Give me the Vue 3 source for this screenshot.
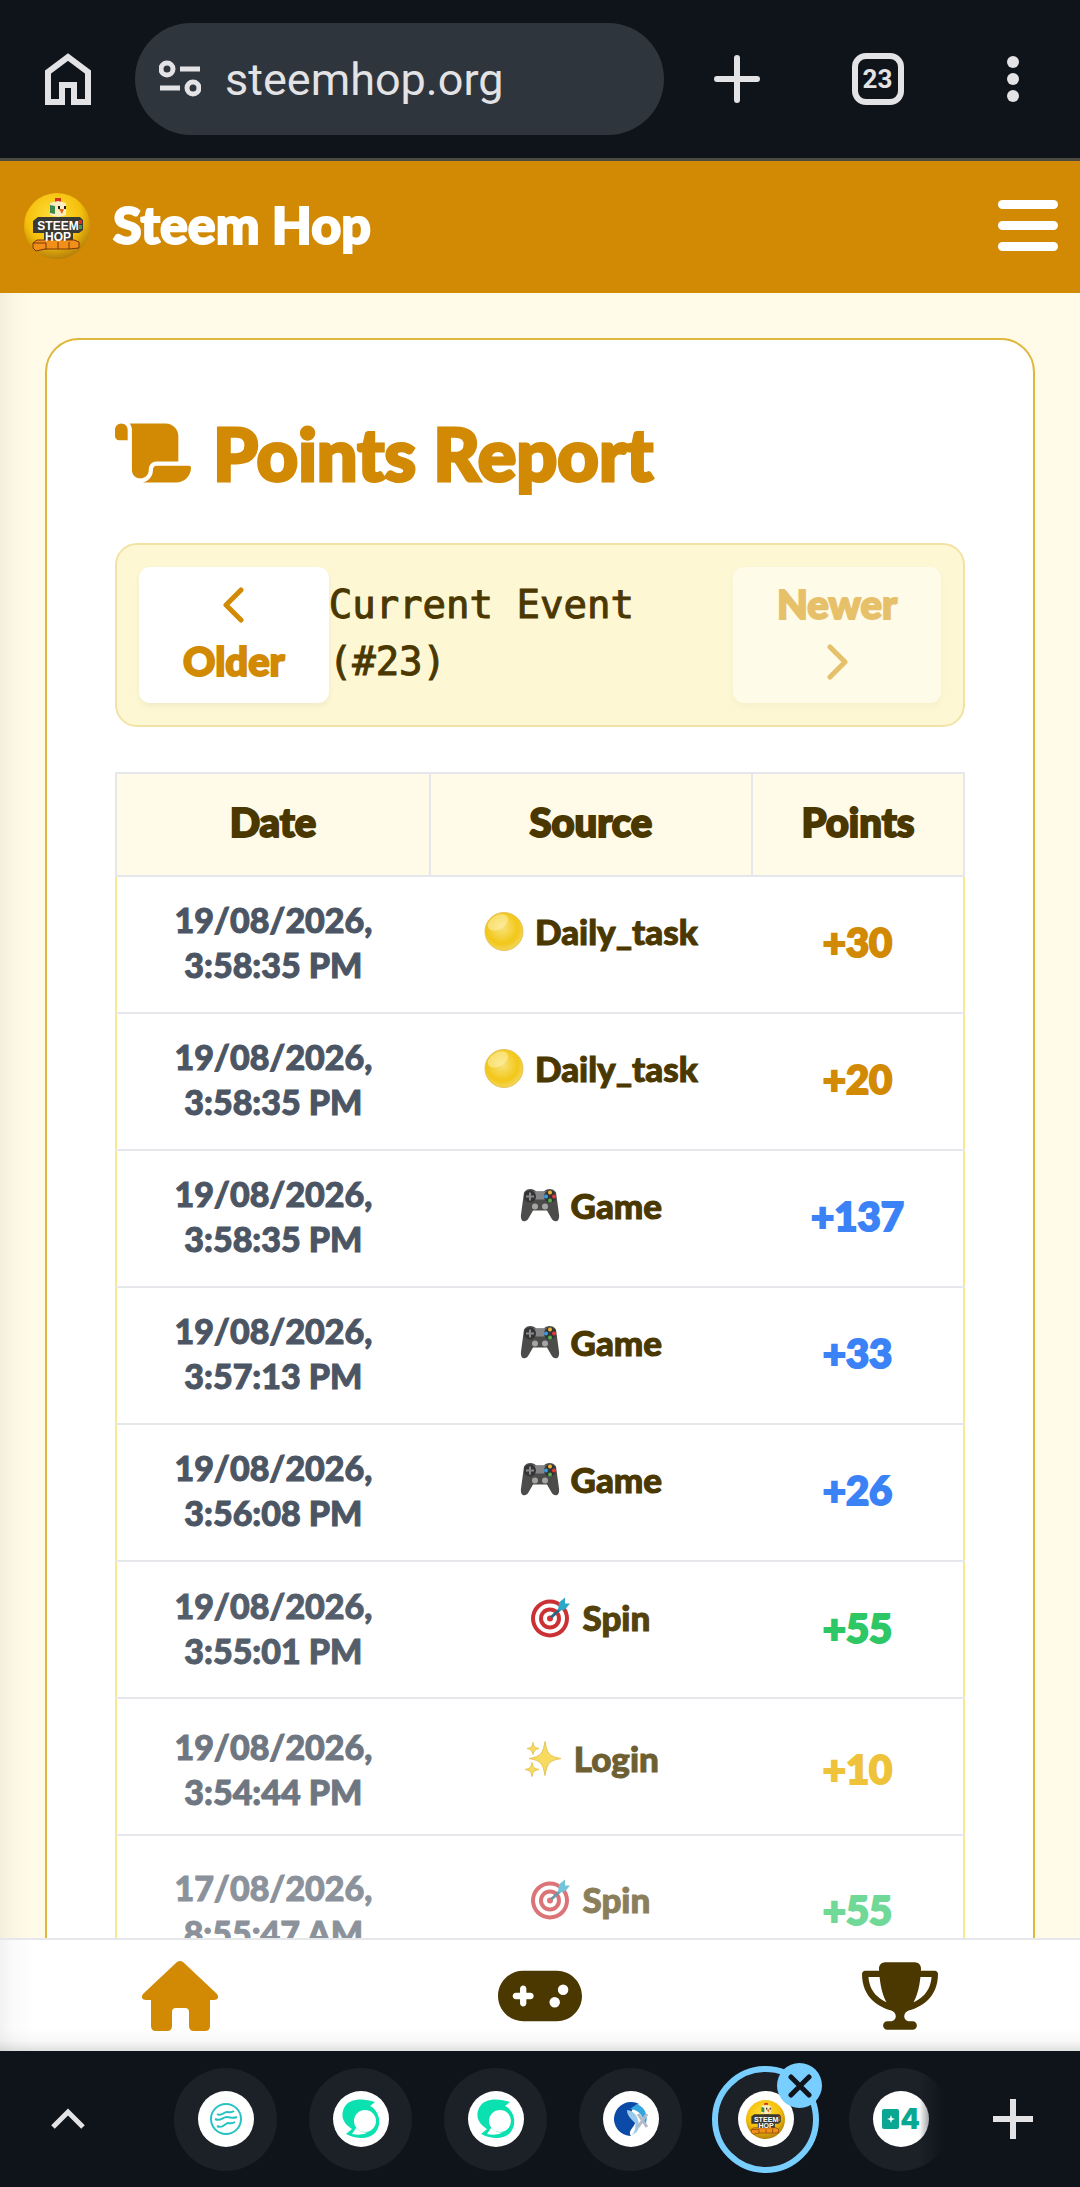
<template>
  <div class="screen">

    <!-- Shared logo, used in the header and in the tab strip -->
    <svg class="defs" aria-hidden="true">
      <defs>
        <radialGradient id="ball" cx="0.45" cy="0.35" r="0.7">
          <stop offset="0" stop-color="#ffdf3a" />
          <stop offset="0.6" stop-color="#f5bf0c" />
          <stop offset="1" stop-color="#a8730a" />
        </radialGradient>
        <symbol id="hop-logo" viewBox="0 0 66 66">
          <circle cx="33" cy="33" r="33" fill="url(#ball)" />
          <path d="M31 5h6v5h-6z" fill="#d8301c" />
          <path d="M26 10l8-2 8 2v12l-8 2-8-2z" fill="#fbeec0" />
          <path d="M26 12l5 1v8l-5-1z" fill="#3f8a4c" />
          <path d="M34 13h2v3h-2zM40 13h2v3h-2z" fill="#222" />
          <path d="M35 16h5l-2 5z" fill="#e8641b" />
          <path d="M30 24h10v3H30z" fill="#a8581b" />
          <path d="M9 28l5-4h42l3 3v10l-4 3h-6v10H20V40H9z" fill="#3a3a32" />
          <path d="M55 27h3v4h-3z" fill="#d8301c" />
          <path d="M55 32h3v4h-3z" fill="#3f9a4c" />
          <path d="M9 50l4-3h37l5 2v6l-10 1H21l-9 2-3-3z" fill="#f0901a" stroke="#7a3608" stroke-width="1" />
          <path d="M9 50h13v7M34 49v7M45 49v7" fill="none" stroke="#7a3608" stroke-width="1" />
          <text x="34" y="37" class="logo-text">STEEM</text>
          <text x="34" y="48" class="logo-text">HOP</text>
        </symbol>
      </defs>
    </svg>

    <!-- Browser toolbar -->
    <div class="toolbar">
      <button class="tool" aria-label="Home">
        <svg width="46" height="52" viewBox="0 0 46 52">
          <path d="M3 49V19L23 4l20 15v30H29V32H17v17z" fill="none" stroke="#e3e3e6" stroke-width="6" />
        </svg>
      </button>
      <div class="address">
        <svg width="42" height="38" viewBox="0 0 42 38" fill="none" stroke="#e3e3e6" stroke-width="5">
          <circle cx="8" cy="9" r="6" />
          <path d="M21 9h20M1 28h20" />
          <circle cx="34" cy="28" r="6" />
        </svg>
        <input v-model="url" aria-label="Address" />
      </div>
      <button class="tool wide" aria-label="New tab">
        <svg width="46" height="48" viewBox="0 0 46 48">
          <path d="M23 3v42M3 24h40" stroke="#e3e3e6" stroke-width="6" stroke-linecap="round" />
        </svg>
      </button>
      <button class="tool" aria-label="Tabs"><span class="count">23</span></button>
      <button class="tool" aria-label="Menu">
        <svg width="12" height="48" viewBox="0 0 12 48" fill="#e3e3e6">
          <circle cx="6" cy="7" r="6" />
          <circle cx="6" cy="24" r="6" />
          <circle cx="6" cy="41" r="6" />
        </svg>
      </button>
    </div>

    <div class="site">

      <header class="header">
        <svg class="brand-logo"><use href="#hop-logo" /></svg>
        <span class="brand">Steem Hop</span>
        <button class="burger" aria-label="Open menu">
          <span></span>
          <span></span>
          <span></span>
        </button>
      </header>

      <main class="content">
        <div class="card">

          <h1>
            <svg width="76" height="68" viewBox="0 0 576 512" fill="currentColor">
              <path d="M0 80v48c0 17.7 14.3 32 32 32H96V80c0-26.5-21.5-48-48-48S0 53.5 0 80zM112 32c10 13.4 16 30 16 48V384c0 35.3 28.7 64 64 64s64-28.7 64-64v-5.3c0-32.4 26.3-58.7 58.7-58.7H480V128c0-53-43-96-96-96H112zM464 480c61.9 0 112-50.1 112-112c0-8.8-7.2-16-16-16H314.7c-14.7 0-26.7 11.9-26.7 26.7V384c0 53-43 96-96 96H464z" />
            </svg>
            Points Report
          </h1>

          <div class="pager">
            <button class="page-btn" @click="older">
              <span class="arrow">
                <svg width="22" height="36" viewBox="0 0 22 36">
                  <path d="M18 3L3 18l15 15" />
                </svg>
              </span>
              Older
            </button>
            <span class="event">{{ eventLabel }}</span>
            <button class="page-btn" :disabled="event === latest" @click="newer">
              Newer
              <span class="arrow">
                <svg width="22" height="36" viewBox="0 0 22 36">
                  <path d="M4 3l15 15L4 33" />
                </svg>
              </span>
            </button>
          </div>

          <table>
            <thead>
              <tr>
                <th class="col-date">Date</th>
                <th class="col-source">Source</th>
                <th class="col-points">Points</th>
              </tr>
            </thead>
            <tbody>
              <tr v-for="(row, i) in rows" :key="i">
                <td class="date">
                  <div :style="fade(row)">{{ row.day }},<br />{{ row.time }}</div>
                </td>
                <td class="source">
                  <div class="source-inner" :style="fade(row)">
                    <svg v-if="row.source === 'Daily_task'" class="emoji" viewBox="0 0 40 40">
                      <defs>
                        <radialGradient :id="'coin' + i" cx="0.45" cy="0.4" r="0.6">
                          <stop offset="0" stop-color="#f9e27c" />
                          <stop offset="0.7" stop-color="#f2c718" />
                          <stop offset="1" stop-color="#f3d65a" />
                        </radialGradient>
                      </defs>
                      <circle cx="20" cy="20" r="19" :fill="`url(#coin${i})`" stroke="#e8c25a" stroke-width="1" />
                      <ellipse cx="14" cy="11" rx="11" ry="7" fill="#fff3b8" opacity="0.5" transform="rotate(-30 14 11)" />
                    </svg>
                    <svg v-else-if="row.source === 'Game'" class="emoji" viewBox="0 0 40 40">
                      <path d="M4 7C7 2 14 3 16 6h8c2-3 9-4 12 1l3 22c1 8-5 9-8 3l-4-7H13l-4 7C6 38 0 37 1 29z" fill="#4c4c4a" />
                      <path d="M13 6h14v8H13z" fill="#858588" />
                      <circle cx="10" cy="11" r="6" fill="#333436" />
                      <circle cx="30" cy="11" r="6" fill="#333436" />
                      <path d="M10 7v8M6 11h8" stroke="#8a8a8c" stroke-width="2" />
                      <circle cx="30" cy="7" r="2" fill="#f2b632" />
                      <circle cx="34" cy="11" r="2" fill="#e23a38" />
                      <circle cx="30" cy="15" r="2" fill="#55b047" />
                      <circle cx="26" cy="11" r="2" fill="#3b9be0" />
                      <circle cx="15" cy="21" r="3" fill="#a5a5a5" />
                      <circle cx="25" cy="21" r="3" fill="#a5a5a5" />
                    </svg>
                    <svg v-else-if="row.source === 'Spin'" class="emoji" viewBox="0 0 40 40">
                      <circle cx="19" cy="21" r="19" fill="#c8272b" />
                      <circle cx="19" cy="21" r="15" fill="#fff" />
                      <circle cx="19" cy="21" r="11" fill="#c8272b" />
                      <circle cx="19" cy="21" r="7" fill="#fff" />
                      <circle cx="19" cy="21" r="3" fill="#d8272b" />
                      <path d="M20 20L32 9" stroke="#17607f" stroke-width="3" />
                      <path d="M27 13l1-8 6-5v6h5l-5 6z" fill="#22a3c4" />
                    </svg>
                    <svg v-else class="emoji" viewBox="0 0 40 40" fill="#f4d336" stroke="#e2b52c" stroke-width="1">
                      <path d="M22 3c2 12 4 15 16 17-12 2-14 5-16 17-2-12-4-15-16-17C18 18 20 15 22 3z" />
                      <path d="M10 4c1 5 2 5 6 6-4 1-5 2-6 6-1-4-2-5-6-6 4-1 5-1 6-6z" />
                      <path d="M9 24c1 5 2 6 7 7-5 1-6 2-7 7-1-5-2-6-7-7 5-1 6-2 7-7z" />
                    </svg>
                    {{ row.source }}
                  </div>
                </td>
                <td class="points" :class="row.color">
                  <div :style="fade(row)">+{{ row.points }}</div>
                </td>
              </tr>
            </tbody>
          </table>

        </div>
      </main>

      <nav class="bottom-nav">
        <a href="#" class="active" aria-label="Home">
          <svg width="76" height="70" viewBox="0 0 76 70" fill="currentColor">
            <path d="M35 1q3-2 6 0l33 31q3 3 2 5-1 2-4 2h-4v26q0 5-5 5H52q-5 0-5-5V51q0-4-4-4H34q-4 0-4 4v14q0 5-5 5H14q-5 0-5-5V39H4q-3 0-4-2-1-2 2-5z" />
          </svg>
        </a>
        <a href="#" aria-label="Games">
          <svg width="84" height="68" viewBox="0 0 640 512" fill="currentColor">
            <path d="M192 64C86 64 0 150 0 256S86 448 192 448H448c106 0 192-86 192-192s-86-192-192-192H192zM496 168a40 40 0 1 1 0 80 40 40 0 1 1 0-80zM392 304a40 40 0 1 1 80 0 40 40 0 1 1 -80 0zM168 200c0-13.3 10.7-24 24-24s24 10.7 24 24v32h32c13.3 0 24 10.7 24 24s-10.7 24-24 24H216v32c0 13.3-10.7 24-24 24s-24-10.7-24-24V280H136c-13.3 0-24-10.7-24-24s10.7-24 24-24h32V200z" />
          </svg>
        </a>
        <a href="#" aria-label="Leaderboard">
          <svg width="76" height="68" viewBox="0 0 576 512" fill="currentColor">
            <path d="M400 0H176c-26.5 0-48.1 21.8-47.1 48.2c.2 5.3 .4 10.6 .7 15.8H24C10.7 64 0 74.7 0 88c0 92.6 33.5 157 78.5 200.7c44.3 43.1 98.3 64.8 138.1 75.8c23.4 6.5 39.4 26 39.4 45.6c0 20.9-17 37.9-37.9 37.9H192c-17.7 0-32 14.3-32 32s14.3 32 32 32H384c17.7 0 32-14.3 32-32s-14.3-32-32-32H357.9C337 448 320 431 320 410.1c0-19.6 15.9-39.2 39.4-45.6c39.9-11 93.9-32.7 138.2-75.8C542.5 245 576 180.6 576 88c0-13.3-10.7-24-24-24H446.4c.3-5.2 .5-10.4 .7-15.8C448.1 21.8 426.5 0 400 0zM48.9 112h84.4c9.1 90.1 29.2 150.3 51.9 190.6c-24.9-11-50.8-26.5-73.2-48.3c-32-31.1-58-76-63-142.3zM464.1 254.3c-22.4 21.8-48.3 37.3-73.2 48.3c22.7-40.3 42.8-100.5 51.9-190.6h84.4c-5.1 66.3-31.1 111.2-63 142.3z" />
          </svg>
        </a>
      </nav>

    </div>

    <!-- Browser tab strip -->
    <div class="tabs">
      <button class="tool" aria-label="Expand">
        <svg width="34" height="22" viewBox="0 0 34 22">
          <path d="M2 19L17 4l15 15" fill="none" stroke="#e3e3e6" stroke-width="5" />
        </svg>
      </button>
      <div class="strip">
        <div v-for="(tab, i) in tabs" :key="i" class="tab">
          <button class="chip" :class="{ current: tab === 'hop' }" :aria-label="'Tab ' + (i + 1)">
            <span class="favicon">
              <svg v-if="tab === 'waves'" width="34" height="34" viewBox="0 0 34 34" fill="none" stroke="#27c3c4" stroke-width="2">
                <circle cx="17" cy="17" r="15" />
                <path d="M8 12c5 3 6-2 10-2 3 0 4 1 7-1M6 17c6 3 7-2 12-2 4 0 5 2 10 0M8 24c6 3 7-2 11-3 3 0 4 1 7-1" />
              </svg>
              <svg v-else-if="tab === 'steem'" width="40" height="40" viewBox="0 0 40 40">
                <path d="M34 3C22-1 8-1 3 9c-4 9 0 16 8 21L5 35c10 5 22 6 29-1 7-8 5-20-3-26l-2-1z" fill="#0be0b0" />
                <circle cx="24" cy="22" r="11" fill="#fff" />
                <path d="M11 35l4-6q7 6 13 4-7 4-17 2z" fill="#fff" />
              </svg>
              <svg v-else-if="tab === 'sx'" width="36" height="36" viewBox="0 0 36 36">
                <path d="M26 3A17 17 0 1 0 18 35c-5-6 8-11 3-17-6-6-1-12 5-15z" fill="#0b4aa6" />
                <path d="M24 3c9 4 12 13 8 22C30 15 27 9 17 8z" fill="#35a5e2" />
                <path d="M14 9c8 1 12 7 12 18-5-8-12-10-12-18zM19 34c5-5 2-11 5-17 4 8 2 14-5 17z" fill="#9ac9ea" />
                <path d="M25 13l9 13M34 13l-9 13" stroke="#b4bac8" stroke-width="3" />
              </svg>
              <svg v-else-if="tab === 'hop'" width="39" height="39"><use href="#hop-logo" /></svg>
              <svg v-else width="40" height="28" viewBox="0 0 40 28">
                <rect x="1" y="4" width="17" height="20" rx="2" fill="#0aa892" />
                <path d="M10 10l1 3 3 1-3 1-1 3-1-3-3-1 3-1z" fill="#fff" />
                <text x="29" y="24" class="four">4</text>
              </svg>
            </span>
          </button>
          <button v-if="tab === 'hop'" class="close" aria-label="Close tab">
            <svg width="24" height="24" viewBox="0 0 24 24">
              <path d="M3 3l18 18M21 3L3 21" stroke="#10141b" stroke-width="5" stroke-linecap="round" />
            </svg>
          </button>
        </div>
      </div>
      <button class="tool" aria-label="New tab">
        <svg width="40" height="40" viewBox="0 0 40 40">
          <path d="M20 0v40M0 20h40" stroke="#e3e3e6" stroke-width="6" />
        </svg>
      </button>
    </div>

  </div>
</template>

<script setup>
import { ref, computed } from 'vue'

const url = ref('steemhop.org')

const latest = 23
const event = ref(latest)

const eventLabel = computed(() =>
  event.value === latest ? `Current Event (#${latest})` : `Event (#${event.value})`
)

const older = () => {
  if (event.value > 1) event.value--
}

const newer = () => {
  if (event.value < latest) event.value++
}

// shown = how far the row's entrance has got, 0 to 1
const rows = [
  { day: '19/08/2026', time: '3:58:35 PM', source: 'Daily_task', points: 30, color: 'orange', shown: 1 },
  { day: '19/08/2026', time: '3:58:35 PM', source: 'Daily_task', points: 20, color: 'orange', shown: 1 },
  { day: '19/08/2026', time: '3:58:35 PM', source: 'Game', points: 137, color: 'blue', shown: 1 },
  { day: '19/08/2026', time: '3:57:13 PM', source: 'Game', points: 33, color: 'blue', shown: 1 },
  { day: '19/08/2026', time: '3:56:08 PM', source: 'Game', points: 26, color: 'blue', shown: 1 },
  { day: '19/08/2026', time: '3:55:01 PM', source: 'Spin', points: 55, color: 'green', shown: 0.95 },
  { day: '19/08/2026', time: '3:54:44 PM', source: 'Login', points: 10, color: 'yellow', shown: 0.8 },
  { day: '17/08/2026', time: '8:55:47 AM', source: 'Spin', points: 55, color: 'green', shown: 0.64 }
]

const fade = (row) => {
  if (row.shown === 1) return null
  return {
    opacity: row.shown,
    transform: `translateY(${Math.round((1 - row.shown) * 24)}px)`
  }
}

const tabs = ['waves', 'steem', 'steem', 'sx', 'hop', 'cards']
</script>

<style>
body {
  margin: 0;
  background: #0f141b;
}
</style>

<style scoped>
* {
  box-sizing: border-box;
}

.screen {
  display: flex;
  flex-direction: column;
  height: 100vh;
  overflow: hidden;
  font-family: Lato, "Liberation Sans", sans-serif;
  font-weight: 900;
  color: #4a3800;
}

button {
  margin: 0;
  padding: 0;
  border: none;
  background: none;
  font: inherit;
  color: inherit;
}

svg {
  display: block;
  flex: none;
}

.defs {
  position: absolute;
  width: 0;
  height: 0;
}

.logo-text {
  font-family: "Liberation Sans", sans-serif;
  font-size: 12px;
  font-weight: 700;
  fill: #fff;
  text-anchor: middle;
}

/* Browser toolbar */
.toolbar {
  display: flex;
  align-items: center;
  flex: none;
  height: 161px;
  border-bottom: 3px solid #4a4a42;
}

.tool {
  display: flex;
  justify-content: center;
  align-items: center;
  flex: none;
  width: 135px;
  height: 112px;
}

.tool.wide {
  width: 146px;
}

.address {
  display: flex;
  align-items: center;
  gap: 24px;
  flex: 1;
  min-width: 0;
  height: 112px;
  padding: 0 24px;
  border-radius: 56px;
  background: #2f353c;
}

.address input {
  flex: 1;
  min-width: 0;
  padding: 0;
  border: none;
  outline: none;
  background: none;
  color: #e3e3e6;
  font-family: Roboto, sans-serif;
  font-size: 45px;
}

.count {
  width: 52px;
  height: 52px;
  border: 6px solid #e3e3e6;
  border-radius: 14px;
  color: #e3e3e6;
  font-family: Roboto, sans-serif;
  font-size: 26px;
  font-weight: 700;
  line-height: 40px;
  text-align: center;
}

/* Web page */
.site {
  display: flex;
  flex-direction: column;
  flex: 1;
  min-height: 0;
  background: #fffbe8;
}

/* soft shade down the left edge */
.content::before,
.bottom-nav::before {
  content: "";
  position: absolute;
  top: 0;
  bottom: 0;
  left: 0;
  width: 36px;
  background: linear-gradient(to right, rgba(0, 0, 0, 0.05), rgba(0, 0, 0, 0.02) 12px, transparent);
}

.header {
  display: flex;
  align-items: center;
  gap: 23px;
  flex: none;
  height: 132px;
  padding: 0 22px 3px 24px;
  background: #d28a04;
  color: #fff;
}

.brand-logo {
  width: 66px;
  height: 66px;
}

.brand {
  flex: 1;
  padding-bottom: 4px;
  font-size: 52px;
  -webkit-text-stroke: 2px currentColor;
}

.burger {
  display: flex;
  flex-direction: column;
  gap: 12px;
}

.burger span {
  width: 60px;
  height: 9px;
  border-radius: 5px;
  background: #fff;
}

.content {
  position: relative;
  flex: 1;
  min-height: 0;
  padding: 45px;
  overflow: hidden;
}

.card {
  padding: 68px;
  border: 2px solid #dfb73c;
  border-radius: 34px;
  background: #fff;
}

h1 {
  display: flex;
  align-items: center;
  gap: 22px;
  margin: 0 0 45px;
  color: #d28a04;
  font-size: 72px;
  font-weight: 900;
  line-height: 90px;
  -webkit-text-stroke: 3px currentColor;
}

h1 svg {
  -webkit-text-stroke: 0;
}

/* Event switcher */
.pager {
  display: flex;
  margin-bottom: 45px;
  padding: 22px;
  border: 2px solid #f2e2a4;
  border-radius: 22px;
  background: #fef7d3;
  font-size: 40px;
  line-height: 57px;
}

.page-btn {
  display: flex;
  flex-direction: column;
  align-items: center;
  flex: none;
  padding: 9px 44px 13px;
  border-radius: 11px;
  background: #fff;
  box-shadow: 0 3px 6px rgba(0, 0, 0, 0.05);
  color: #d28a04;
  -webkit-text-stroke: 2px currentColor;
}

.page-btn:disabled {
  opacity: 0.5;
}

.arrow {
  display: flex;
  align-items: center;
  height: 57px;
}

.arrow path {
  fill: none;
  stroke: currentColor;
  stroke-width: 5;
  stroke-linecap: round;
  stroke-linejoin: round;
}

.event {
  flex: 1;
  padding: 9px 0 13px;
  font-family: "DejaVu Sans Mono", monospace;
  font-size: 39px;
  font-weight: 400;
  -webkit-text-stroke: 1px currentColor;
}

/* Points table */
table {
  width: 100%;
  border-collapse: collapse;
  table-layout: fixed;
}

.col-date {
  width: 37%;
}

.col-source {
  width: 38%;
}

.col-points {
  width: 25%;
}

th {
  padding: 20px 0 24px;
  border: 2px solid #e5e7eb;
  background: #fffbe8;
  font-size: 40px;
  font-weight: 900;
  line-height: 57px;
  -webkit-text-stroke: 2px currentColor;
}

tbody tr {
  border: 2px solid #fae88a;
  border-top-color: #e5e7eb;
}

td {
  padding: 20px 0 25px;
  border-bottom: 2px solid #e5e7eb;
  font-size: 34px;
  line-height: 45px;
  text-align: center;
  -webkit-text-stroke: 1px currentColor;
}

.date {
  color: #4b5563;
}

.source {
  padding-top: 32px;
  vertical-align: top;
}

.source-inner {
  display: flex;
  justify-content: center;
  gap: 11px;
  font-size: 35px;
}

.emoji {
  width: 40px;
  height: 45px;
}

.points {
  font-size: 40px;
  -webkit-text-stroke: 2px currentColor;
}

.orange {
  color: #d28a04;
}

.blue {
  color: #3b82f6;
}

.green {
  color: #22c55e;
}

.yellow {
  color: #eab308;
}

/* Bottom navigation */
.bottom-nav {
  position: relative;
  display: flex;
  flex: none;
  height: 113px;
  border-top: 2px solid #e5e7eb;
  background: linear-gradient(to top, #dfe1e0, #f8f8f8 10px, #fff 22px);
}

.bottom-nav a {
  display: flex;
  justify-content: center;
  align-items: center;
  flex: 1;
  color: #4a3800;
}

.bottom-nav a.active {
  color: #d28a04;
}

/* Browser tab strip */
.tabs {
  display: flex;
  align-items: center;
  flex: none;
  height: 136px;
}

.strip {
  position: relative;
  display: flex;
  flex: 1;
  min-width: 0;
  margin-left: 23px;
  overflow: hidden;
}

.strip::after {
  content: "";
  position: absolute;
  top: 0;
  right: 0;
  bottom: 0;
  width: 26px;
  background: linear-gradient(to right, transparent, #0f141b);
}

.tab {
  position: relative;
  display: flex;
  justify-content: center;
  align-items: center;
  flex: none;
  width: 135px;
  height: 136px;
}

.chip {
  display: flex;
  justify-content: center;
  align-items: center;
  width: 103px;
  height: 103px;
  border-radius: 50%;
  background: #1c2027;
}

.chip.current {
  width: 107px;
  height: 107px;
  border: 6px solid #78cfff;
}

.favicon {
  display: flex;
  justify-content: center;
  align-items: center;
  width: 56px;
  height: 56px;
  border-radius: 50%;
  background: #fff;
}

.four {
  font-family: Inter, sans-serif;
  font-size: 28px;
  font-weight: 900;
  fill: #0aa892;
  text-anchor: middle;
}

.close {
  position: absolute;
  top: 12px;
  right: 11px;
  display: flex;
  justify-content: center;
  align-items: center;
  width: 45px;
  height: 45px;
  border-radius: 50%;
  background: #78cfff;
}
</style>
